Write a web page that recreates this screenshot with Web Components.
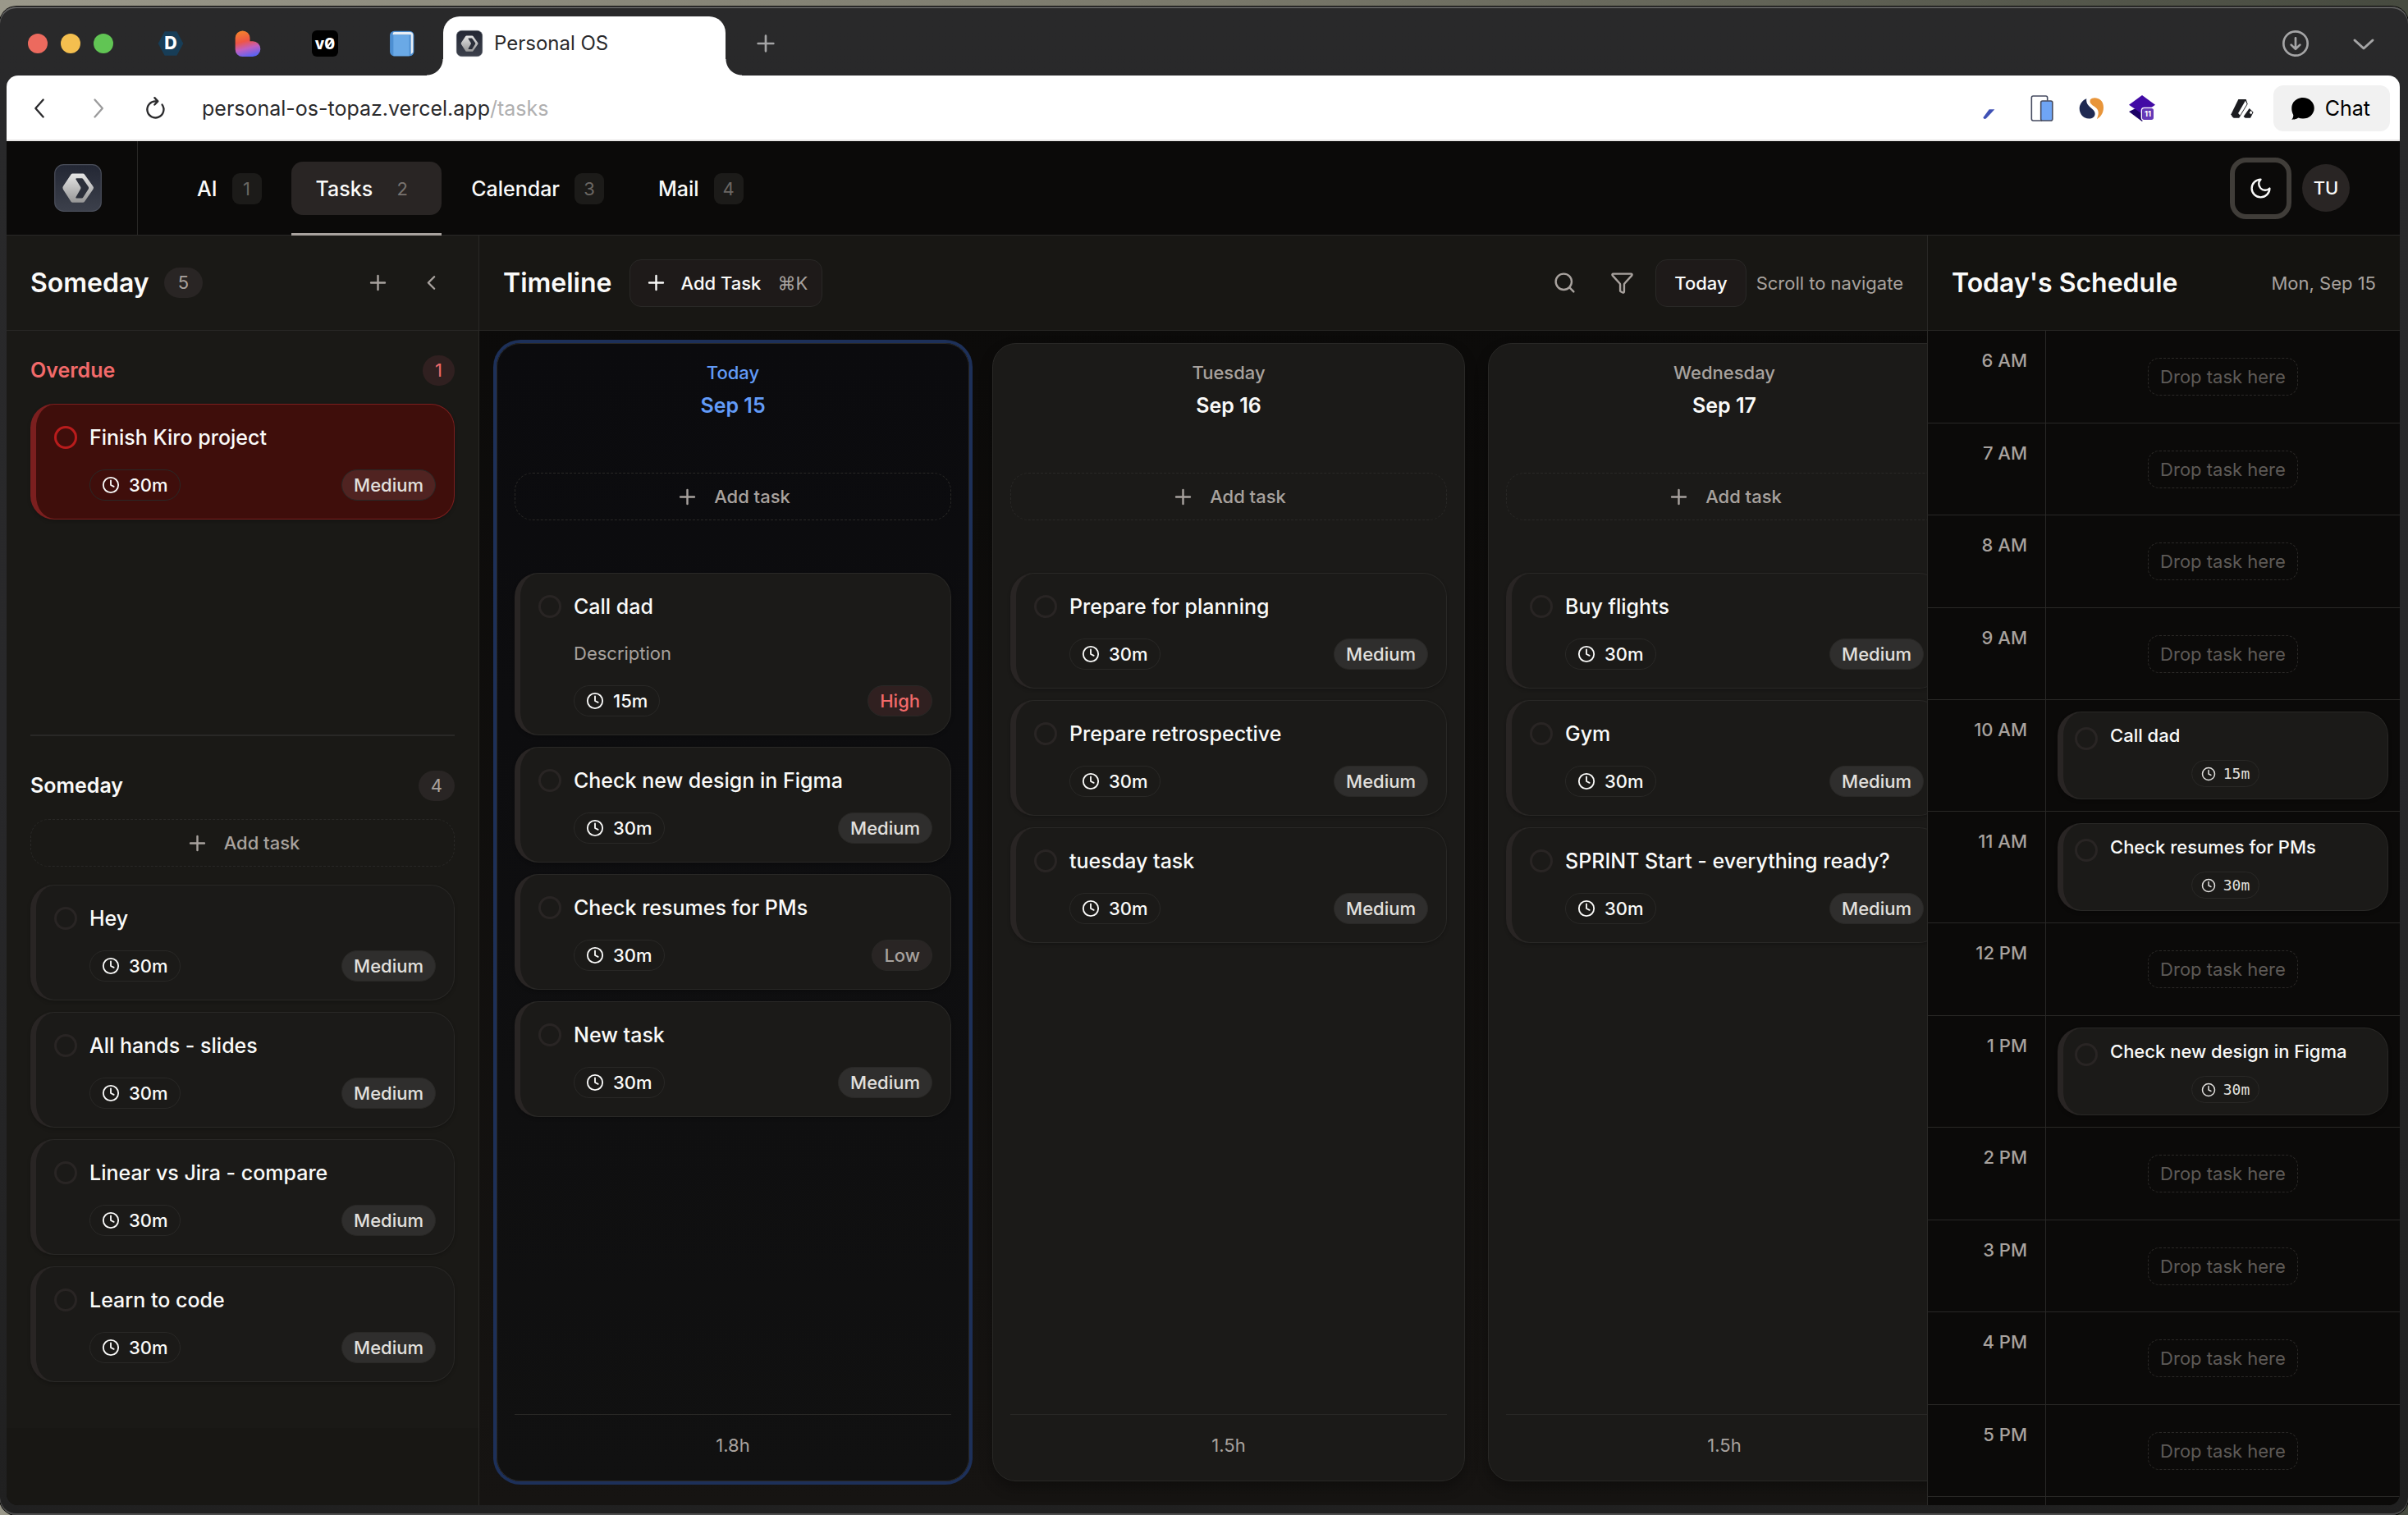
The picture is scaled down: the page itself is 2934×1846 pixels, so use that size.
<!DOCTYPE html>
<html lang="en">
<head>
<meta charset="utf-8">
<title>Personal OS</title>
<style>
	html, body {
		height: 100%;
		margin: 0;
	}

	body {
		display: flex;
		box-sizing: border-box;
		padding-top: 8px;
		background: linear-gradient(90deg, #9a988a, #7a796b 50%, #464a3f);
		font-family: Inter, "Liberation Sans", sans-serif;
		font-size: 22px;
		line-height: 30px;
		color: #fafaf9;
		overflow: hidden;

		--line: #292826;
		--raised: #292524;
		--card: #1b1a18;
		--muted: #a8a29e;
		--danger: #f26a6a;
		--accent: #629bf8;
	}
</style>
</head>
<body>
<browser-window>
	<tab-strip slot="tabs">
		<button slot="pinned" aria-label="D"><os-icon name="fav-d" size="32"></os-icon></button>
		<button slot="pinned" aria-label="Blob"><os-icon name="fav-blob" size="32"></os-icon></button>
		<button slot="pinned" aria-label="v0"><os-icon name="fav-v0" size="32"></os-icon></button>
		<button slot="pinned" aria-label="Notebook"><os-icon name="fav-book" size="32"></os-icon></button>
		<os-icon slot="favicon" name="logo" size="32"></os-icon>
		Personal OS
	</tab-strip>
	<address-bar slot="address" path="/tasks">personal-os-topaz.vercel.app</address-bar>

	<app-header>
		<nav-item href="#ai" key="1">AI</nav-item>
		<nav-item href="#tasks" key="2" active>Tasks</nav-item>
		<nav-item href="#calendar" key="3">Calendar</nav-item>
		<nav-item href="#mail" key="4">Mail</nav-item>
	</app-header>

	<app-board>
		<app-panel slot="start" class="someday">
			<h2 slot="title">Someday</h2>
			<count-badge slot="lead">5</count-badge>
			<icon-button slot="tools" icon="plus" label="Add task"></icon-button>
			<icon-button slot="tools" icon="chevron-left" label="Collapse"></icon-button>
			<task-section class="overdue" tone="danger" count="1" heading="Overdue">
				<task-card overdue time="30m" priority="Medium">Finish Kiro project</task-card>
			</task-section>
			<task-section divided count="4" heading="Someday">
				<add-task></add-task>
				<task-card time="30m" priority="Medium">Hey</task-card>
				<task-card time="30m" priority="Medium">All hands - slides</task-card>
				<task-card time="30m" priority="Medium">Linear vs Jira - compare</task-card>
				<task-card time="30m" priority="Medium">Learn to code</task-card>
			</task-section>
		</app-panel>

		<app-panel class="timeline">
			<h2 slot="title">Timeline</h2>
			<text-button slot="lead" icon="plus" hint="⌘K">Add Task</text-button>
			<icon-button slot="tools" icon="search" label="Search"></icon-button>
			<icon-button slot="tools" icon="filter" label="Filter"></icon-button>
			<text-button slot="tools">Today</text-button>
			<span slot="tools">Scroll to navigate</span>
			<day-lane>
				<day-column today day="Today" date="Sep 15" total="1.8h">
					<task-card time="15m" priority="High">Call dad<span slot="note">Description</span></task-card>
					<task-card time="30m" priority="Medium">Check new design in Figma</task-card>
					<task-card time="30m" priority="Low">Check resumes for PMs</task-card>
					<task-card time="30m" priority="Medium">New task</task-card>
				</day-column>
				<day-column day="Tuesday" date="Sep 16" total="1.5h">
					<task-card time="30m" priority="Medium">Prepare for planning</task-card>
					<task-card time="30m" priority="Medium">Prepare retrospective</task-card>
					<task-card time="30m" priority="Medium">tuesday task</task-card>
				</day-column>
				<day-column day="Wednesday" date="Sep 17" total="1.5h">
					<task-card time="30m" priority="Medium">Buy flights</task-card>
					<task-card time="30m" priority="Medium">Gym</task-card>
					<task-card time="30m" priority="Medium">SPRINT Start - everything ready?</task-card>
				</day-column>
			</day-lane>
		</app-panel>

		<app-panel slot="end" class="schedule">
			<h2 slot="title">Today's Schedule</h2>
			<span slot="tools">Mon, Sep 15</span>
			<hour-row hour="6 AM"></hour-row>
			<hour-row hour="7 AM"></hour-row>
			<hour-row hour="8 AM"></hour-row>
			<hour-row hour="9 AM"></hour-row>
			<hour-row hour="10 AM"><task-card compact time="15m">Call dad</task-card></hour-row>
			<hour-row hour="11 AM"><task-card compact time="30m">Check resumes for PMs</task-card></hour-row>
			<hour-row hour="12 PM"></hour-row>
			<hour-row hour="1 PM"><task-card compact time="30m">Check new design in Figma</task-card></hour-row>
			<hour-row hour="2 PM"></hour-row>
			<hour-row hour="3 PM"></hour-row>
			<hour-row hour="4 PM"></hour-row>
			<hour-row hour="5 PM"></hour-row>
			<hour-row><span></span></hour-row>
		</app-panel>
	</app-board>
</browser-window>

<script>
const
	LINE = 'fill="none" stroke="currentColor" stroke-linecap="round" stroke-linejoin="round" stroke-width="2"',
	ICONS = Object.freeze({
		'plus': `<path ${LINE} d="M5 12h14M12 5v14"/>`,
		'chevron-left': `<path ${LINE} d="m15 18-6-6 6-6"/>`,
		'search': `<g ${LINE}><circle cx="11" cy="11" r="8"/><path d="m21 21-4.3-4.3"/></g>`,
		'filter': `<path ${LINE} d="M10 20a1 1 0 0 0 .55.9l2 1A1 1 0 0 0 14 21v-7a2 2 0 0 1 .52-1.34L21.74 4.67A1 1 0 0 0 21 3H3a1 1 0 0 0-.74 1.67l7.22 7.99A2 2 0 0 1 10 14z"/>`,
		'clock': `<g ${LINE}><circle cx="12" cy="12" r="10"/><path d="M12 6v6l4 2"/></g>`,
		'moon': `<path ${LINE} d="M12 3a6 6 0 0 0 9 9 9 9 0 1 1-9-9Z"/>`,
		'back': `<path ${LINE} d="m16 3-8 9 8 9"/>`,
		'forward': `<path ${LINE} d="m9 3 8 9-8 9"/>`,
		'reload': `<path ${LINE} d="M18.5 8.2A8.6 8.6 0 1 1 12 4.6h1.5M10.6 1l3.4 3.6-3.4 3.6"/>`,
		'download': `<g ${LINE}><circle cx="12" cy="12" r="11"/><path d="M12 7v10M8 13.2l4 3.9 4-3.9"/></g>`,
		'chevron-down': `<path ${LINE} style="stroke-width: 3px" d="m1 8 11 10 11-10"/>`,
		'bubble': '<path fill="currentColor" d="M12 1.5c6 0 11 4.4 11 10.2S18 22 12 22c-1.700 0-3.200-.3-4.600-.9C5.500 22.500 3.500 23 1 23c1.300-1.500 1.700-3 1.600-4.700C1.500 16.400 1 14 1 11.700 1 5.900 6 1.500 12 1.500Z"/>',
		'logo': `
			<defs>
				<linearGradient id="b" x2="0" y2="1"><stop stop-color="#232734"/><stop offset="1" stop-color="#3c404b"/></linearGradient>
				<linearGradient id="h" x2="0" y2="1"><stop stop-color="#e6e6e6"/><stop offset="1" stop-color="#969696"/></linearGradient>
			</defs>
			<rect x=".3" y=".3" width="23.4" height="23.4" rx="4.5" fill="url(#b)" stroke="#4a4e5a" stroke-width=".5"/>
			<path fill="url(#h)" d="M9.3 4.8h5.2a1 1 0 0 1 .8.4l4.3 6a1.2 1.2 0 0 1 0 1.5l-4.3 6.200a1 1 0 0 1-.8.4H9.300a1 1 0 0 1-.8-.4l-4-6.200a1.500 1.500 0 0 1 0-1.500l4-6a1 1 0 0 1 .8-.4Z"/>
			<path fill="#2b2f3a" d="M11.3 7.100h2.600a.8.8 0 0 1 .7.4l2.700 4a1 1 0 0 1 0 1l-2.700 4.300a.8.8 0 0 1-.7.4h-2.600c-.4 0-.5-.4-.3-.7l2.300-4a1 1 0 0 0 0-1L11 7.800c-.2-.3-.1-.7.3-.7Z"/>`,
		'fav-d': `
			<path fill="#173d57" d="M6.500 1h11L23.500 12l-6 11h-11L.5 12Z"/>
			<text x="12" y="17.500" text-anchor="middle" font-family="Inter, sans-serif" font-weight="800" font-size="16" fill="#fff">D</text>`,
		'fav-blob': `
			<defs>
				<linearGradient id="f" x1=".3" x2=".55" y2="1"><stop stop-color="#f5822c"/><stop offset=".4" stop-color="#ee5546"/><stop offset=".68" stop-color="#c05fc0"/><stop offset="1" stop-color="#5a63f2"/></linearGradient>
			</defs>
			<path fill="url(#f)" d="M.5 7a6.700 6.700 0 0 1 13.400 0v3h2.600a7 7 0 0 1 0 14H7A6.500 6.500 0 0 1 .5 17.500Z"/>`,
		'fav-v0': `
			<rect width="24" height="24" rx="4.5"/>
			<text x="12" y="17" text-anchor="middle" font-family="Inter, sans-serif" font-weight="800" font-size="14" fill="#fff">v0</text>
			<path stroke="#fff" stroke-width="1.5" d="m13.500 16 6-8"/>`,
		'fav-book': `
			<rect x=".8" y=".5" width="22" height="23" rx="4" fill="#4d8fd2"/>
			<path fill="#e8eef5" d="M3.500 3A1.500 1.500 0 0 1 5 1.500h14A3 3 0 0 1 22 4.500V20l-2 2V4H3.500Z"/>
			<path fill="#6aa9e6" d="M4 4.500h14.500v19H4Z"/>`,
		'ext-pen': '<path fill="#3f51b5" d="M4 20.500l5.500-7.500H14.500L7 21q-2 1.800-3-.5Z"/>',
		'ext-phones': `
			<path fill="#fff" stroke="#454b60" stroke-width="1.2" d="M17 5V2.500Q17 .8 15.500.8H4Q2.500.8 2.500 2.500v19Q2.500 23.200 4 23.200h8"/>
			<rect x="11" y="5.200" width="10.600" height="18" rx="1.5" fill="#6fa5f5" stroke="#454b60" stroke-width="1.2"/>`,
		'ext-swirl': `
			<path fill="#1f2a52" d="M7.500 2.500C-.5 6-1.500 15 4 20c5 4 13 2 11.500-4C14 11.500 6 10 7.500 2.500Z"/>
			<path fill="#e8953a" d="M11 3.500C14.500 0 24 2 24 11c0 6-3 9.500-6.500 11.500 1-3 2.500-6 .5-9.500C16 9.500 9.500 8.500 11 3.500Z"/>`,
		'ext-layers': `
			<path fill="#1c0066" d="M0 15 5 12.500h15L12 24Z"/>
			<path fill="#420ba5" d="m12 0 12 8.800L12 17 0 8.800Z"/>
			<rect x="11.500" y="11.500" width="11.500" height="11.500" rx="2.500" fill="#6639b7" stroke="#fff"/>
			<text x="17.200" y="19.800" text-anchor="middle" font-family="Inter, sans-serif" font-weight="700" font-size="7" fill="#fff">11</text>`,
		'ext-arc': `
			<path fill="#1b1c20" d="M8.500 3.800h7L17 8 9.200 20.800h-5q-1.700-.8-2.400-3.300Z"/>
			<path fill="#fff" d="M14.900 5 16.300 8 10 18.300 8.300 16.500Z"/>
			<path fill="#1b1c20" d="m18.500 12 3.700 3.600-2.700 5.200h-4.700l-1.600-1.300Z"/>
			<path fill="#fff" d="m19.800 14 1.500 1.500-1 2.200-1.700-1.500Z"/>`
	}),
	RESET = `
		*, *::before, *::after { box-sizing: border-box; }
		:host { box-sizing: border-box; }
		button {
			margin: 0;
			padding: 0;
			border: 0;
			background: none;
			color: inherit;
			font: inherit;
			cursor: pointer;
		}
	`;

//	registers an element whose shadow root is cloned from the given markup,
//	[data-text] nodes are filled from the attributes of the host
function define(name, markup, setup) {
	const template = document.createElement('template');
	template.innerHTML = markup;
	const style = document.createElement('style');
	style.textContent = RESET;
	template.content.prepend(style);

	customElements.define(name, class extends HTMLElement {
		constructor() {
			super();
			this.attachShadow({ mode: 'open' }).appendChild(template.content.cloneNode(true));
			this.shadowRoot.querySelectorAll('[data-text]').forEach(e => {
				e.textContent = this.getAttribute(e.dataset.text) || '';
				e.hidden = !e.textContent;
			});
			if (setup) {
				setup(this, this.shadowRoot);
			}
		}
	});
}

define('os-icon', `
	<style>
		:host { display: inline-flex; flex: none; }
		svg { display: block; overflow: visible; }
	</style>
	<svg viewBox="0 0 24 24" aria-hidden="true"></svg>
`, (host, root) => {
	const svg = root.querySelector('svg');
	svg.setAttribute('width', host.getAttribute('size') || 29);
	svg.setAttribute('height', host.getAttribute('size') || 29);
	svg.innerHTML = ICONS[host.getAttribute('name')] || '';
});

define('browser-window', `
	<style>
		:host {
			display: flex;
			flex-direction: column;
			flex: 1;
			min-width: 0;
			padding: 0 10px 12px 8px;
			border-radius: 20px;
			background: linear-gradient(#29292a, #28282a 50%, #202020);
			box-shadow: inset 0 2px 0 #5e5e5e, inset 0 -2px 0 #4c4c4c, 0 0 0 1px #000;
		}

		.page {
			display: flex;
			flex-direction: column;
			flex: 1;
			min-height: 0;
			border-radius: 0 0 14px 14px;
			background: #0b0a09;
			overflow: hidden;
		}
	</style>
	<slot name="tabs"></slot>
	<slot name="address"></slot>
	<div class="page"><slot></slot></div>
`);

define('tab-strip', `
	<style>
		:host {
			display: flex;
			align-items: center;
			height: 84px;
			padding: 6px 32px 0 26px;
			color: #a5a5a6;
		}

		.lights, .pinned, .tools { display: flex; align-items: center; }
		.lights { gap: 16px; }
		.lights button { width: 24px; height: 24px; border-radius: 50%; }
		.close { background: #ec6a5e; }
		.minimise { background: #f4bf4f; }
		.zoom { background: #61c554; }
		.pinned { gap: 62px; margin-left: 54px; }

		::slotted(button) {
			display: flex;
			padding: 0;
			border: 0;
			background: none;
		}

		.tab {
			display: flex;
			align-self: flex-end;
			align-items: flex-end;
			margin: 0 13px 0 14px;
		}

		/* the curves that join the tab with the bar below */
		.tab::before, .tab::after {
			content: '';
			width: 20px;
			height: 20px;
			background: radial-gradient(circle at 0 0, transparent 19px, #fff 20px);
		}
		.tab::after { background: radial-gradient(circle at 100% 0, transparent 19px, #fff 20px); }

		.tab button {
			display: flex;
			align-items: center;
			gap: 14px;
			width: 344px;
			height: 72px;
			padding: 0 16px 6px;
			border-radius: 20px 20px 0 0;
			background: #fff;
			color: #29292b;
			font-size: 24px;
		}

		.tools { gap: 55px; margin-left: auto; }
		.tools button, .new { display: flex; }
	</style>
	<div class="lights">
		<button class="close" aria-label="Close"></button>
		<button class="minimise" aria-label="Minimise"></button>
		<button class="zoom" aria-label="Zoom"></button>
	</div>
	<div class="pinned"><slot name="pinned"></slot></div>
	<div class="tab"><button><slot name="favicon"></slot><span><slot></slot></span></button></div>
	<button class="new" aria-label="New tab"><os-icon name="plus" size="32"></os-icon></button>
	<div class="tools">
		<button aria-label="Downloads"><os-icon name="download" size="32"></os-icon></button>
		<button aria-label="All tabs"><os-icon name="chevron-down" size="24"></os-icon></button>
	</div>
`);

define('address-bar', `
	<style>
		:host {
			display: flex;
			align-items: center;
			height: 80px;
			padding: 2px 12px 0 26px;
			border-bottom: 2px solid #e8e6e5;
			border-radius: 14px 14px 0 0;
			background: #fff;
			color: #2b2b2d;
			font-size: 25px;
		}

		button { display: flex; align-items: center; }
		.history { display: flex; gap: 43px; }
		.off { color: #9b9b9c; }
		.url { flex: 1; margin-left: 42px; }
		.url .path { color: #b0b0b1; }
		.extensions { display: flex; gap: 29px; margin-right: 22px; }
		.extensions button { width: 32px; height: 32px; }

		.chat {
			gap: 12px;
			height: 56px;
			padding: 0 24px 0 21px;
			border-radius: 12px;
			background: #f1f1f1;
			color: #000;
		}
	</style>
	<div class="history">
		<button aria-label="Back"><os-icon name="back" size="28"></os-icon></button>
		<button class="off" aria-label="Forward"><os-icon name="forward" size="28"></os-icon></button>
		<button aria-label="Reload"><os-icon name="reload" size="28"></os-icon></button>
	</div>
	<button class="url"><slot></slot><span class="path" data-text="path"></span></button>
	<div class="extensions">
		<button aria-label="Pen"><os-icon name="ext-pen" size="32"></os-icon></button>
		<button aria-label="Device preview"><os-icon name="ext-phones" size="32"></os-icon></button>
		<button aria-label="Swirl"><os-icon name="ext-swirl" size="30"></os-icon></button>
		<button aria-label="Layers"><os-icon name="ext-layers" size="32"></os-icon></button>
		<button aria-label="Empty"></button>
		<button aria-label="Arc"><os-icon name="ext-arc" size="32"></os-icon></button>
	</div>
	<button class="chat"><os-icon name="bubble" size="30"></os-icon>Chat</button>
`);

define('app-header', `
	<style>
		:host {
			display: flex;
			align-items: center;
			height: 115px;
			padding-right: 61px;
			border-bottom: 1px solid var(--line);
		}

		.home {
			display: flex;
			align-self: stretch;
			align-items: center;
			padding: 0 43px 0 58px;
			border-right: 1px solid var(--line);
		}

		nav {
			display: flex;
			align-self: stretch;
			gap: 6px;
			margin: 0 auto 0 42px;
		}

		.theme, .user { display: grid; place-items: center; }

		.theme {
			width: 75px;
			height: 75px;
			margin-right: 13px;
			border: 6px solid #403d39;
			border-radius: 20px;
		}

		.user {
			width: 58px;
			height: 58px;
			border-radius: 50%;
			background: var(--raised);
			font-weight: 500;
		}
	</style>
	<a class="home" href="#home" aria-label="Home"><os-icon name="logo" size="58"></os-icon></a>
	<nav><slot></slot></nav>
	<button class="theme" aria-label="Theme"><os-icon name="moon"></os-icon></button>
	<button class="user">TU</button>
`);

define('nav-item', `
	<style>
		:host {
			display: flex;
			align-items: center;
			margin-bottom: -1px;
		}

		:host([active]) { box-shadow: inset 0 -3px #a8a29e; }
		:host([active]) a { background: var(--raised); }

		a {
			display: flex;
			align-items: center;
			gap: 18px;
			height: 65px;
			padding: 0 30px;
			border-radius: 14px;
			color: inherit;
			font-size: 25px;
			font-weight: 500;
			text-decoration: none;
		}

		kbd {
			width: 36px;
			border-radius: 9px;
			background: #1c1b19;
			color: #6b6763;
			font: 400 22px/38px Inter, sans-serif;
			text-align: center;
		}

		:host([active]) kbd { background: none; color: #78736f; }
	</style>
	<a><slot></slot><kbd data-text="key"></kbd></a>
`, (host, root) => {
	root.querySelector('a').href = host.getAttribute('href');
});

define('app-board', `
	<style>
		:host {
			display: grid;
			grid-template-columns: 576px minmax(0, 1fr) 576px;
			flex: 1;
			min-height: 0;
		}
	</style>
	<slot name="start"></slot>
	<slot></slot>
	<slot name="end"></slot>
`);

define('app-panel', `
	<style>
		:host {
			display: flex;
			flex-direction: column;
			min-width: 0;
			min-height: 0;
			overflow: hidden;
		}

		:host(.someday) {
			border-right: 1px solid var(--line);
			background: linear-gradient(0deg, #181714 94px, #1a1916 94px);
		}
		:host(.timeline) { background: linear-gradient(#0b0a09, #161412); }
		:host(.schedule) { border-left: 1px solid var(--line); background: #0b0a09; }
		:host(.timeline) header { background: #181714; }
		:host(.schedule) header { background: #141310; }

		header {
			display: flex;
			flex: none;
			align-items: center;
			height: 116px;
			padding: 0 29px;
			border-bottom: 1px solid var(--line);
			color: var(--muted);
		}

		::slotted(h2) {
			margin: 0;
			color: #fafaf9;
			font-size: 32px;
			font-weight: 600;
			line-height: 40px;
		}

		.lead { margin-left: 18px; }
		:host(.timeline) .lead { margin-left: 22px; }
		.tools { display: flex; align-items: center; gap: 12px; margin-left: auto; }
		:host(.someday) .tools { gap: 7px; }

		.body {
			display: flex;
			flex-direction: column;
			flex: 1;
			min-height: 0;
		}
	</style>
	<header>
		<slot name="title"></slot>
		<div class="lead"><slot name="lead"></slot></div>
		<div class="tools"><slot name="tools"></slot></div>
	</header>
	<div class="body"><slot></slot></div>
`);

define('count-badge', `
	<style>
		:host {
			display: inline-block;
			padding: 0 15px;
			border-radius: 19px;
			background: var(--raised);
			color: var(--muted);
			font-size: 22px;
			font-weight: 400;
			line-height: 37px;
		}

		:host([tone=danger]) { background: #302020; color: var(--danger); }
		:host([slot=lead]) { padding: 0 17px; }
	</style>
	<slot></slot>
`);

define('icon-button', `
	<style>
		:host { display: block; }
		button {
			display: grid;
			place-items: center;
			width: 58px;
			height: 58px;
		}
	</style>
	<button></button>
`, (host, root) => {
	const button = root.querySelector('button');
	button.setAttribute('aria-label', host.getAttribute('label'));
	button.innerHTML = `<os-icon name="${host.getAttribute('icon')}"></os-icon>`;
});

define('text-button', `
	<style>
		:host { display: block; }
		button {
			display: flex;
			align-items: center;
			height: 58px;
			padding: 0 22px;
			border: 1px solid var(--line);
			border-radius: 14px;
			background: #1e1a19;
			color: #fafaf9;
			font-weight: 500;
		}
		:host([icon]) button { padding: 0 17px; }
		os-icon { margin-right: 15px; }
		kbd {
			margin-left: 20px;
			color: var(--muted);
			font: 400 22px/30px Inter, "DejaVu Sans", sans-serif;
		}
	</style>
	<button><span><slot></slot></span><kbd data-text="hint"></kbd></button>
`, (host, root) => {
	if (host.hasAttribute('icon')) {
		root.querySelector('button').insertAdjacentHTML('afterbegin', `<os-icon name="${host.getAttribute('icon')}"></os-icon>`);
	}
});

define('add-task', `
	<style>
		:host { display: block; }
		button {
			display: flex;
			align-items: center;
			justify-content: center;
			gap: 18px;
			width: 100%;
			height: 58px;
			border: 1px dashed var(--line);
			border-radius: 22px;
			color: var(--muted);
			font-weight: 500;
		}
	</style>
	<button><os-icon name="plus"></os-icon>Add task</button>
`);

define('task-section', `
	<style>
		:host {
			display: block;
			padding: 29px 29px 0;
		}

		:host(.overdue) { height: 492px; }
		:host([divided]) { padding-top: 0; }
		:host([divided]) section { padding-top: 41px; border-top: 2px solid #292826; }
		section { display: flex; flex-direction: column; gap: 14px; }

		.head {
			display: flex;
			align-items: center;
			justify-content: space-between;
			height: 38px;
			margin-bottom: 8px;
			font-size: 25px;
			font-weight: 600;
		}

		:host([tone=danger]) .head { color: var(--danger); }
		::slotted(add-task) { margin-bottom: 8px; }
		h3 { margin: 0; font: inherit; }
	</style>
	<section>
		<div class="head"><h3 data-text="heading"></h3><count-badge data-text="count"></count-badge></div>
		<slot></slot>
	</section>
`, (host, root) => {
	if (host.hasAttribute('tone')) {
		root.querySelector('count-badge').setAttribute('tone', host.getAttribute('tone'));
	}
});

define('task-card', `
	<style>
		:host {
			display: grid;
			grid-template-columns: 28px minmax(0, 1fr);
			align-items: center;
			column-gap: 15px;
			row-gap: 21px;
			flex: none;
			padding: 22px;
			border: 1px solid var(--line);
			border-left: 7px solid var(--raised);
			border-radius: 29px;
			background: var(--card);
			box-shadow: 0 2px 4px rgba(0, 0, 0, .2);
			line-height: 36px;
		}

		input {
			width: 28px;
			height: 28px;
			margin: 0;
			border: 3px solid var(--raised);
			border-radius: 50%;
			appearance: none;
		}
		input:checked { background: var(--muted); }

		label { font-size: 25px; font-weight: 500; white-space: nowrap; }
		::slotted([slot=note]) { grid-column: 2; color: var(--muted); }

		.meta {
			display: flex;
			grid-column: 2;
			align-items: center;
			justify-content: space-between;
		}

		.chip {
			display: flex;
			align-items: center;
			gap: 11px;
			height: 38px;
			padding: 0 14px;
			border: 1px solid var(--line);
			border-radius: 19px;
			font-weight: 500;
		}

		.priority { background: #2f2e2d; color: #e2e0de; }
		.priority[hidden] { display: none; }
		:host([priority=High]) .priority { background: #302020; color: var(--danger); }
		:host([priority=Low]) .priority { background: var(--raised); color: var(--muted); }

		:host([overdue]) { border-color: #7b1f1f; background: #3f0e0b; }
		:host([overdue]) input { border-color: #b91c1c; }
		:host([overdue]) .priority { background: #502321; }

		:host([compact]) {
			row-gap: 16px;
			padding: 14px;
			line-height: 28px;
		}
		:host([compact]) input { align-self: start; margin: 4px 0 -4px; }
		:host([compact]) label { font-size: 22px; }
		:host([compact]) .meta { grid-column: 1 / -1; justify-content: center; }
		:host([compact]) .chip {
			gap: 9px;
			height: 33px;
			padding: 0 11px;
			color: #e2e0de;
			font: 400 18px/30px "DejaVu Sans Mono", monospace;
		}
	</style>
	<input type="checkbox" id="done">
	<label for="done"><slot></slot></label>
	<slot name="note"></slot>
	<div class="meta">
		<span class="chip"><span data-text="time"></span></span>
		<span class="chip priority" data-text="priority"></span>
	</div>
`, (host, root) => {
	const size = host.hasAttribute('compact') ? 18 : 22;
	root.querySelector('.chip').insertAdjacentHTML('afterbegin', `<os-icon name="clock" size="${size}"></os-icon>`);
});

define('day-lane', `
	<style>
		:host {
			display: flex;
			flex: 1;
			gap: 28px;
			min-height: 0;
			padding: 15px 0 29px 21px;
		}
	</style>
	<slot></slot>
`);

define('day-column', `
	<style>
		:host {
			display: flex;
			flex: none;
			flex-direction: column;
			width: 576px;
			padding: 20px 21px;
			border: 1px solid var(--line);
			border-radius: 29px;
			background: var(--card);
			box-shadow: 0 8px 16px rgba(0, 0, 0, .3);
		}

		:host([today]) {
			background: linear-gradient(#0b0b0e, #111);
			box-shadow: 0 0 0 4px #1d3059;
		}

		header {
			display: flex;
			flex-direction: column;
			gap: 7px;
			color: var(--muted);
			font-weight: 500;
			text-align: center;
		}

		strong { color: #fafaf9; font-size: 25px; font-weight: 600; line-height: 36px; }
		:host([today]) header, :host([today]) strong { color: var(--accent); }
		add-task { margin: 64px 0; }
		.tasks { display: flex; flex: 1; flex-direction: column; gap: 14px; min-height: 0; }

		footer {
			padding: 22px 0 8px;
			border-top: 1px solid var(--line);
			color: var(--muted);
			text-align: center;
		}
	</style>
	<header><span data-text="day"></span><strong data-text="date"></strong></header>
	<add-task></add-task>
	<div class="tasks"><slot></slot></div>
	<footer data-text="total"></footer>
`);

define('hour-row', `
	<style>
		:host {
			display: grid;
			flex: none;
			grid-template-columns: 144px minmax(0, 1fr);
			min-height: 113px;
			border-bottom: 1px solid var(--line);
		}
		:host(:nth-of-type(even)) { min-height: 112px; }

		time {
			padding: 21px 22px 0 0;
			border-right: 1px solid var(--line);
			color: var(--muted);
			font-weight: 500;
			text-align: right;
		}
		time[hidden] { display: block; }

		.cell { display: grid; align-items: center; padding: 14px; }

		.drop {
			justify-self: center;
			padding: 7px 14px;
			border: 1px dashed #2b2927;
			border-radius: 14px;
			color: #5e5a57;
		}
	</style>
	<time data-text="hour"></time>
	<div class="cell"><slot><span class="drop">Drop task here</span></slot></div>
`);
</script>
</body>
</html>
